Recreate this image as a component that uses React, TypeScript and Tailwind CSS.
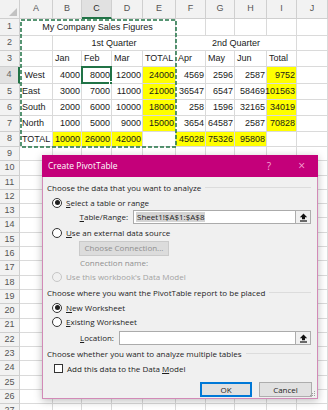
import React from 'react';

type Cell = { t?: string; a?: 'l' | 'r' | 'c'; span?: 4 | 5; y?: boolean; sel?: boolean };

const rows: Cell[][] = [
  [{ t: 'My Company Sales Figures', a: 'c', span: 5 }, {}, {}, {}, {}, {}],
  [{}, { t: '1st Quarter', a: 'c', span: 4 }, { t: '2nd Quarter', a: 'c', span: 4 }, {}],
  [{}, { t: 'Jan' }, { t: 'Feb' }, { t: 'Mar' }, { t: 'TOTAL' }, { t: 'Apr' }, { t: 'May' }, { t: 'Jun' }, { t: 'Total' }, {}],
  [
    { t: '\u00a0West' }, { t: '4000', a: 'r' }, { t: '8000', a: 'r', sel: true }, { t: '12000', a: 'r' }, { t: '24000', a: 'r', y: true },
    { t: '4569', a: 'r' }, { t: '2596', a: 'r' }, { t: '2587', a: 'r' }, { t: '9752', a: 'r', y: true }, {},
  ],
  [
    { t: 'East' }, { t: '3000', a: 'r' }, { t: '7000', a: 'r' }, { t: '11000', a: 'r' }, { t: '21000', a: 'r', y: true },
    { t: '36547', a: 'r' }, { t: '6547', a: 'r' }, { t: '58469', a: 'r' }, { t: '101563', a: 'r', y: true }, {},
  ],
  [
    { t: 'South' }, { t: '2000', a: 'r' }, { t: '6000', a: 'r' }, { t: '10000', a: 'r' }, { t: '18000', a: 'r', y: true },
    { t: '258', a: 'r' }, { t: '1596', a: 'r' }, { t: '32165', a: 'r' }, { t: '34019', a: 'r', y: true }, {},
  ],
  [
    { t: 'North' }, { t: '1000', a: 'r' }, { t: '5000', a: 'r' }, { t: '9000', a: 'r' }, { t: '15000', a: 'r', y: true },
    { t: '3654', a: 'r' }, { t: '64587', a: 'r' }, { t: '2587', a: 'r' }, { t: '70828', a: 'r', y: true }, {},
  ],
  [
    { t: 'TOTAL' }, { t: '10000', a: 'r', y: true }, { t: '26000', a: 'r', y: true }, { t: '42000', a: 'r', y: true }, {},
    { t: '45028', a: 'r', y: true }, { t: '75326', a: 'r', y: true }, { t: '95808', a: 'r', y: true }, {}, {},
  ],
];

const emptyRow: Cell[] = Array.from({ length: 10 }, () => ({}));
for (let i = 9; i <= 27; i++) rows.push(emptyRow);

const COLS = ['A', 'B', 'C', 'D', 'E', 'F', 'G', 'H', 'I', 'J'];

function DataCell({ c }: { c: Cell }) {
  const span = c.span === 5 ? 'col-span-5' : c.span === 4 ? 'col-span-4' : '';
  const align = c.a === 'r' ? 'justify-end pr-[1px]' : c.a === 'c' ? 'justify-center' : 'justify-start pl-[2px]';
  const bg = c.y ? 'bg-[#ffff00]' : 'bg-white';
  return (
    <div className={`${span} ${align} ${bg} relative flex items-center whitespace-nowrap border-r border-b border-[#dadada] text-[9px] text-[#1a1a1a] leading-none`}>
      {c.t}
      {c.sel && (
        <span className="absolute left-[-1px] top-[-1px] right-[-1px] bottom-[-1px] border-2 border-[#217346]">
          <span className="absolute right-[-3px] bottom-[-3px] w-[4px] h-[4px] bg-[#217346] border border-white" />
        </span>
      )}
    </div>
  );
}

function Radio({ checked, disabled }: { checked?: boolean; disabled?: boolean }) {
  return (
    <span
      className={`w-[10px] h-[10px] rounded-full border shrink-0 flex items-center justify-center ${
        disabled ? 'border-[#c6c6c6] bg-[#f0f0f0]' : 'border-[#333333] bg-white'
      }`}
    >
      {checked && <span className="w-[5px] h-[5px] rounded-full bg-[#1f1f1f]" />}
    </span>
  );
}

function CollapseBtn() {
  return (
    <span className="w-[16px] h-full border border-[#adadad] bg-[#f0f0f0] flex items-center justify-center shrink-0">
      <svg width="9" height="9" viewBox="0 0 9 9">
        <path d="M4.5 0.5 L8.2 4.2 H6 V6.3 H3 V4.2 H0.8 Z" fill="#111" />
        <rect x="1" y="7.4" width="7" height="1.2" fill="#111" />
      </svg>
    </span>
  );
}

function Heading({ children }: { children: React.ReactNode }) {
  return (
    <div className="h-[15px] flex items-center gap-[4px] pl-[4px] pr-[6px] text-[#1e1e1e]">
      <span className="whitespace-nowrap">{children}</span>
      <span className="flex-1 h-px bg-[#dcdcdc]" />
    </div>
  );
}

function Dialog() {
  return (
    <div className="absolute left-[42px] top-[155px] w-[276px] h-[244px] flex flex-col shadow-[0_2px_8px_rgba(0,0,0,0.25)] font-[family-name:'Open_Sans',sans-serif] text-[8px] leading-none">
      <div className="h-[22px] bg-[#c4007a] flex items-center pl-[6px] pr-[13px] text-white shrink-0">
        <span className="text-[8.5px] flex-1">Create PivotTable</span>
        <span className="text-[10px] text-[#f6a6d3] mr-[27px]">?</span>
        <span className="text-[12px] text-[#f6a6d3]">×</span>
      </div>
      <div className="flex-1 bg-[#f0f0f0] border-l border-r border-b border-[#d28ab7] flex flex-col pt-[3px] relative">
        <Heading>Choose the data that you want to analyze</Heading>
        <div className="h-[15px] flex items-center pl-[9px] gap-[4px] text-[#1e1e1e]">
          <Radio checked />
          <span>
            <span className="underline">S</span>elect a table or range
          </span>
        </div>
        <div className="h-[14px] flex items-center pl-[35px] pr-[6px] text-[#1e1e1e]">
          <span className="w-[50px] text-right shrink-0">
            <span className="underline">T</span>able/Range:
          </span>
          <div className="ml-[5px] flex-1 h-full flex">
            <div className="flex-1 bg-white border border-[#ababab] border-r-0 flex items-center pl-[2px]">
              <span className="bg-[#d4d4d4] px-[1px] py-[1px]">Sheet1!$A$1:$A$8</span>
            </div>
            <CollapseBtn />
          </div>
        </div>
        <div className="h-[15px] mt-[1px] flex items-center pl-[9px] gap-[4px] text-[#1e1e1e]">
          <Radio />
          <span>
            <span className="underline">U</span>se an external data source
          </span>
        </div>
        <div className="h-[16px] pl-[36px] flex items-center">
          <div className="w-[90px] h-[15px] bg-[#dcdcdc] border border-[#cacaca] flex items-center justify-center text-[#8f8f8f]">
            Choose Connection...
          </div>
        </div>
        <div className="h-[14px] pl-[37px] flex items-center text-[#8f8f8f]">Connection name:</div>
        <div className="h-[14px] flex items-center pl-[9px] gap-[4px] text-[#a3a3a3]">
          <Radio disabled />
          <span>Use this workbook's Data Model</span>
        </div>
        <div className="h-[1px]" />
        <Heading>Choose where you want the PivotTable report to be placed</Heading>
        <div className="h-[15px] flex items-center pl-[9px] gap-[4px] text-[#1e1e1e]">
          <Radio checked />
          <span>
            <span className="underline">N</span>ew Worksheet
          </span>
        </div>
        <div className="h-[14px] flex items-center pl-[9px] gap-[4px] text-[#1e1e1e]">
          <Radio />
          <span>
            <span className="underline">E</span>xisting Worksheet
          </span>
        </div>
        <div className="h-[14px] mt-[2px] flex items-center pl-[37px] pr-[6px] text-[#1e1e1e]">
          <span className="w-[32px] shrink-0">
            <span className="underline">L</span>ocation:
          </span>
          <div className="ml-[7px] flex-1 h-full flex">
            <div className="flex-1 bg-white border border-[#ababab] border-r-0" />
            <CollapseBtn />
          </div>
        </div>
        <div className="h-[1px]" />
        <Heading>Choose whether you want to analyze multiple tables</Heading>
        <div className="h-[15px] flex items-center pl-[11px] gap-[4px] text-[#1e1e1e]">
          <span className="w-[9px] h-[9px] border border-[#333333] bg-white shrink-0" />
          <span>
            Add this data to the Data <span className="underline">M</span>odel
          </span>
        </div>
        <div className="flex justify-end gap-[7px] pr-[5px] mt-[6px]">
          <div className="w-[52px] h-[15px] bg-[#e1e1e1] border-2 border-[#0078d7] flex items-center justify-center text-[#1e1e1e]">
            OK
          </div>
          <div className="w-[53px] h-[15px] bg-[#e1e1e1] border border-[#adadad] flex items-center justify-center text-[#1e1e1e]">
            Cancel
          </div>
        </div>
        <svg className="absolute right-[1px] bottom-[1px]" width="8" height="8" viewBox="0 0 8 8">
          <rect x="6" y="2" width="1" height="1" fill="#a0a0a0" />
          <rect x="4" y="4" width="1" height="1" fill="#a0a0a0" />
          <rect x="6" y="4" width="1" height="1" fill="#a0a0a0" />
          <rect x="2" y="6" width="1" height="1" fill="#a0a0a0" />
          <rect x="4" y="6" width="1" height="1" fill="#a0a0a0" />
          <rect x="6" y="6" width="1" height="1" fill="#a0a0a0" />
        </svg>
      </div>
    </div>
  );
}

export default function App() {
  return (
    <div className="w-[328px] h-[410px] relative overflow-hidden bg-white font-[family-name:'Liberation_Sans',Arial,sans-serif]">
      <div className="grid grid-cols-[20px_33px_29px_30px_31px_33px_30px_29px_32px_30px_31px] grid-rows-[19px_17px_15px_16px_17px_16px_16px_16px_15px_repeat(19,14.3px)]">
        <div className="relative bg-[#f2f2f2] border-r border-b border-[#cfcfcf]">
          <svg className="absolute right-[2px] bottom-[2px]" width="8" height="8" viewBox="0 0 8 8">
            <path d="M8 0 V8 H0 Z" fill="#c2c2c2" />
          </svg>
        </div>
        {COLS.map((c) =>
          c === 'C' ? (
            <div
              key={c}
              className="bg-[#e1e1e1] border-r border-b-2 border-r-[#cfcfcf] border-b-[#217346] flex items-center justify-center text-[9px] text-[#2b2b2b]"
            >
              {c}
            </div>
          ) : (
            <div key={c} className="bg-[#f2f2f2] border-r border-b border-[#cfcfcf] flex items-center justify-center text-[9px] text-[#555555]">
              {c}
            </div>
          )
        )}
        {rows.map((r, i) => (
          <React.Fragment key={i}>
            {i === 3 ? (
              <div className="bg-[#e1e1e1] border-r-2 border-b border-r-[#217346] border-b-[#cfcfcf] flex items-center justify-center text-[9px] text-[#666666]">
                {i + 1}
              </div>
            ) : (
              <div className="bg-[#f2f2f2] border-r border-b border-[#cfcfcf] flex items-center justify-center text-[9px] text-[#555555]">
                {i + 1}
              </div>
            )}
            {r.map((c, j) => (
              <DataCell key={j} c={c} />
            ))}
          </React.Fragment>
        ))}
      </div>
      <svg className="absolute left-[20px] top-[19px]" width="157" height="129" viewBox="0 0 157 129">
        <rect x="1" y="1" width="155" height="127" fill="none" stroke="#217346" strokeWidth="1.5" strokeDasharray="4 2" />
      </svg>
      <Dialog />
    </div>
  );
}
